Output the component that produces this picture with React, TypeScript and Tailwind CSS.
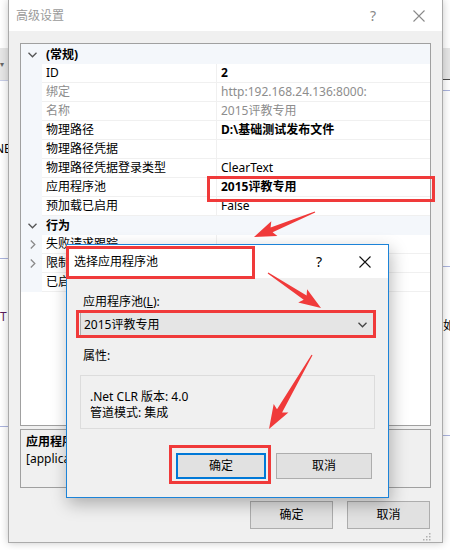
import React from "react";

type P = [number, number];

function arrowPoints(t: P, p: P, hl = 19, hw = 8, sw = 2.6, tw = 0.6) {
  const dx = p[0] - t[0];
  const dy = p[1] - t[1];
  const L = Math.hypot(dx, dy);
  const d: P = [dx / L, dy / L];
  const n: P = [-d[1], d[0]];
  const b: P = [p[0] - d[0] * hl, p[1] - d[1] * hl];
  const w: P = [b[0] - d[0] * 3, b[1] - d[1] * 3];
  const pts: P[] = [
    [t[0] + n[0] * tw, t[1] + n[1] * tw],
    [b[0] + n[0] * sw, b[1] + n[1] * sw],
    [w[0] + n[0] * hw, w[1] + n[1] * hw],
    p,
    [w[0] - n[0] * hw, w[1] - n[1] * hw],
    [b[0] - n[0] * sw, b[1] - n[1] * sw],
    [t[0] - n[0] * tw, t[1] - n[1] * tw],
  ];
  return pts.map((q) => q[0].toFixed(1) + "," + q[1].toFixed(1)).join(" ");
}

function ChevDown({ color = "#555" }: { color?: string }) {
  return (
    <svg width="9" height="6" viewBox="0 0 9 6">
      <path d="M0.5 0.8 L4.5 4.8 L8.5 0.8" fill="none" stroke={color} strokeWidth="1.3" />
    </svg>
  );
}
function ChevRight() {
  return (
    <svg width="6" height="9" viewBox="0 0 6 9">
      <path d="M0.8 0.5 L4.8 4.5 L0.8 8.5" fill="none" stroke="#8a8a8a" strokeWidth="1.3" />
    </svg>
  );
}
function XIcon({ color }: { color: string }) {
  return (
    <svg width="12" height="12" viewBox="0 0 12 12">
      <path d="M0.5 0.5 L11.5 11.5 M11.5 0.5 L0.5 11.5" stroke={color} strokeWidth="1.1" />
    </svg>
  );
}

type Row = {
  name: string;
  value?: string;
  nameGray?: boolean;
  valueGray?: boolean;
  bold?: boolean;
  expand?: boolean;
};

const general: Row[] = [
  { name: "ID", value: "2", bold: true },
  { name: "绑定", value: "http:192.168.24.136:8000:", nameGray: true, valueGray: true },
  { name: "名称", value: "2015评教专用", nameGray: true, valueGray: true },
  { name: "物理路径", value: "D:\\基础测试发布文件", bold: true },
  { name: "物理路径凭据", value: "" },
  { name: "物理路径凭据登录类型", value: "ClearText" },
  { name: "应用程序池", value: "2015评教专用", bold: true },
  { name: "预加载已启用", value: "False" },
];
const behavior: Row[] = [
  { name: "失败请求跟踪", value: "", expand: true },
  { name: "限制", value: "", expand: true },
  { name: "已启用 32 位应用程序", value: "False" },
];

function Category({ label }: { label: string }) {
  return (
    <div className="flex h-[19px] items-center bg-[#f4f7fb]">
      <div className="flex w-[21px] justify-center pl-[1px]">
        <ChevDown />
      </div>
      <div className="pl-[4px] font-bold text-black">{label}</div>
    </div>
  );
}

function PropRow({ r }: { r: Row }) {
  return (
    <div className="flex h-[19px]">
      <div className="flex w-[21px] items-center justify-center bg-[#f4f7fb] pl-[2px]">
        {r.expand ? <ChevRight /> : null}
      </div>
      <div
        className={
          "flex w-[175px] items-center overflow-hidden whitespace-nowrap border-b border-r border-[#f0f0f0] bg-white pl-[4px] " +
          (r.nameGray ? "text-[#8d8d8d]" : "text-black")
        }
      >
        {r.name}
      </div>
      <div
        className={
          "flex flex-1 items-center overflow-hidden whitespace-nowrap border-b border-[#f0f0f0] bg-white pl-[4px] " +
          (r.valueGray ? "text-[#8d8d8d] " : "text-black ") +
          (r.bold ? "font-bold" : "")
        }
      >
        {r.value}
      </div>
    </div>
  );
}

export default function App() {
  const red = "#f03a3a";
  return (
    <div className="relative h-[550px] w-[450px] overflow-hidden bg-white font-['Noto_Sans','Noto_Sans_CJK_SC',sans-serif] text-[12px] leading-[16px]">
      {/* desktop background */}
      <div className="flex h-full w-full justify-between">
        <div className="flex w-[8px] flex-col overflow-hidden">
          <div className="h-[48px] shrink-0" />
          <div className="flex h-[32px] shrink-0 items-center bg-[#e6e6e6] text-[8px] text-[#666]">▾</div>
          <div className="h-[1px] shrink-0 bg-[#c7cde6]" />
          <div className="h-[60px] shrink-0" />
          <div className="-ml-[5px] shrink-0 text-black">NE</div>
          <div className="h-[101px] shrink-0" />
          <div className="h-[1px] shrink-0 bg-[#aab3de]" />
          <div className="h-[50px] shrink-0" />
          <div className="shrink-0 text-[#5a1a5a]">T</div>
          <div className="h-[101px] shrink-0" />
          <div className="h-[1px] shrink-0 bg-[#aab3de]" />
        </div>
        <div className="flex w-[8px] flex-col overflow-hidden">
          <div className="h-[48px] shrink-0" />
          <div className="h-[31px] shrink-0 bg-[#e6e6e6]" />
          <div className="h-[1px] shrink-0 bg-[#4a4a4a]" />
          <div className="h-[10px] shrink-0" />
          <div className="h-[1px] shrink-0 bg-[#aab3de]" />
          <div className="h-[175px] shrink-0" />
          <div className="h-[1px] shrink-0 bg-[#aab3de]" />
          <div className="h-[51px] shrink-0" />
          <div className="shrink-0 pl-[1px] text-black">如</div>
          <div className="h-[101px] shrink-0" />
          <div className="h-[1px] shrink-0 bg-[#aab3de]" />
        </div>
      </div>

      {/* main dialog */}
      <div className="absolute left-[8px] top-0 flex h-[543px] w-[435px] flex-col border-x border-b border-[#aaaaaa] bg-[#f0f0f0] shadow-[0_0_8px_rgba(0,0,0,0.22)]">
        <div className="flex h-[31px] shrink-0 items-center bg-white">
          <div className="flex-1 pl-[7px] text-[#9a9a9a]">高级设置</div>
          <div className="flex w-[46px] justify-center text-[14px] text-[#888]">?</div>
          <div className="flex w-[46px] justify-center">
            <XIcon color="#8a8a8a" />
          </div>
        </div>
        <div className="flex flex-1 flex-col px-[11px] pt-[12px]">
          <div className="flex h-[383px] flex-col border border-[#a0a0a0] bg-white">
            <div className="h-[1px] bg-[#f4f7fb]" />
            <Category label="(常规)" />
            {general.map((r) => (
              <PropRow key={r.name} r={r} />
            ))}
            <Category label="行为" />
            {behavior.map((r) => (
              <PropRow key={r.name} r={r} />
            ))}
          </div>
          <div className="mt-[3px] h-[59px] border border-[#a0a0a0] px-[5px] pt-[3px] text-black">
            <div className="font-bold leading-[17px]">应用程序池</div>
            <div className="leading-[17px]">[applicationPool] 配置此应用程序的应用程序池</div>
          </div>
          <div className="mt-[13px] flex justify-end gap-[14px] pr-[1px]">
            <div className="flex h-[28px] w-[83px] items-center justify-center border border-[#adadad] bg-[#e1e1e1] text-black">
              确定
            </div>
            <div className="flex h-[28px] w-[83px] items-center justify-center border border-[#adadad] bg-[#e1e1e1] text-black">
              取消
            </div>
          </div>
          <div className="flex flex-1 items-end justify-end pb-[1px] pr-[0px]">
            <svg width="9" height="9" viewBox="0 0 9 9">
              {[
                [7, 1],
                [7, 4],
                [4, 4],
                [7, 7],
                [4, 7],
                [1, 7],
              ].map(([x, y]) => (
                <rect key={x + "-" + y} x={x} y={y} width="1.5" height="1.5" fill="#b0b0b0" />
              ))}
            </svg>
          </div>
        </div>
      </div>

      {/* sub dialog */}
      <div className="absolute left-[66px] top-[244px] flex h-[254px] w-[323px] flex-col border border-[#1c83d8] bg-[#f0f0f0] shadow-[2px_6px_16px_rgba(0,0,0,0.28)]">
        <div className="flex h-[33px] shrink-0 items-center bg-white">
          <div className="flex-1 pl-[7px] text-black">选择应用程序池</div>
          <div className="flex w-[46px] justify-center text-[14px] text-black">?</div>
          <div className="flex w-[46px] justify-center">
            <XIcon color="#111" />
          </div>
        </div>
        <div className="flex flex-col px-[13px] pt-[16px] text-black">
          <div className="pl-[3px]">
            应用程序池(<span className="underline">L</span>):
          </div>
          <div className="mt-[2px] flex h-[25px] items-center justify-between border border-[#adadad] bg-[#e5e5e5] pl-[3px] pr-[7px]">
            <span>2015评教专用</span>
            <ChevDown color="#444" />
          </div>
          <div className="mt-[11px] pl-[3px]">属性:</div>
          <div className="mt-[11px] h-[54px] border border-[#dcdcdc] pl-[9px] pt-[13px]">
            <div>.Net CLR 版本: 4.0</div>
            <div>管道模式: 集成</div>
          </div>
          <div className="mt-[24px] flex justify-end gap-[10px] pr-[3px]">
            <div className="flex h-[26px] w-[90px] items-center justify-center border-2 border-[#0078d7] bg-[#e1e1e1]">
              确定
            </div>
            <div className="flex h-[26px] w-[96px] items-center justify-center border border-[#adadad] bg-[#e1e1e1]">
              取消
            </div>
          </div>
        </div>
      </div>

      {/* annotations */}
      <div className="absolute left-[207px] top-[176px] h-[26px] w-[228px] border-[3px] border-[#f03a3a]" />
      <div className="absolute left-[66px] top-[246px] h-[33px] w-[189px] border-[3px] border-[#f03a3a]" />
      <div className="absolute left-[76px] top-[310px] h-[28px] w-[300px] border-[3px] border-[#f03a3a]" />
      <div className="absolute left-[169px] top-[445px] h-[39px] w-[102px] border-[3px] border-[#f03a3a]" />
      <svg className="absolute left-0 top-0" width="450" height="550" viewBox="0 0 450 550">
        <polygon points={arrowPoints([315, 212], [254, 237])} fill={red} />
        <polygon points={arrowPoints([268, 273], [321, 308])} fill={red} />
        <polygon points={arrowPoints([312, 355], [269, 429], 21, 8.5, 3)} fill={red} />
      </svg>
    </div>
  );
}
